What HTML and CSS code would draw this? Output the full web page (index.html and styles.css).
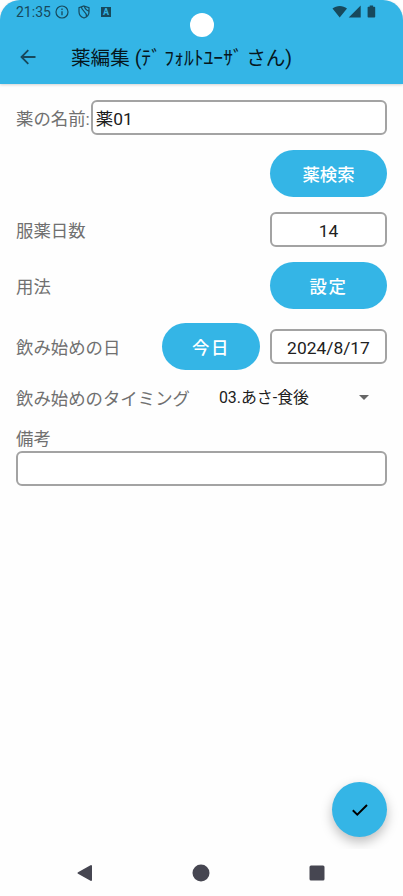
FILE: index.html
```html
<!DOCTYPE html>
<html lang="ja">
<head>
<meta charset="utf-8">
<title>薬編集</title>
<link rel="stylesheet" href="styles.css">
</head>
<body>
<div class="screen">
  <header class="top">
    <div class="status">
      <span class="clock">21:35</span>
      <svg class="info" width="14" height="14" viewBox="0 0 14 14"><circle cx="7" cy="7" r="6" fill="none" stroke="currentColor" stroke-width="1.2"/><path d="M7 6.2v4M7 3.6v1.3" stroke="currentColor" stroke-width="1.3"/></svg>
      <svg class="shield" width="12" height="14" viewBox="0 0 12 14"><path d="M6 1 11 2.700v4C11 9.500 9 12 6 13 3 12 1 9.500 1 6.700v-4zM3.500 2.200C3.500 6 8.800 6.500 8.500 11.300M6.500 1.200C6.500 3.800 8.500 5 10.800 6.200" fill="none" stroke="currentColor" stroke-width="1.200"/></svg>
      <span class="badge">A</span>
      <span class="spacer"></span>
      <svg width="44" height="14" viewBox="0 0 44 14" fill="currentColor"><path d="M.5 3.600C4.500.2 11 .2 15 3.600L7.700 12.500zM28.700.5v12H16.700zM37.700.5h3.400v1.300h1.300q.8 0 .8.800v9.100q0 .8-.8.800h-6q-.8 0-.8-.8V2.600q0-.8.8-.8h1.300z"/></svg>
    </div>
    <div class="camera"></div>
    <div class="appbar">
      <svg class="back" width="16" height="16" viewBox="0 0 16 16" fill="none" stroke="currentColor" stroke-width="1.800"><path d="M15.500 8H1.700M8.300 1.200 1.500 8l6.800 6.800"/></svg>
      <h1>薬編集 (ﾃ<span class="mark">ﾞ</span>ﾌｫﾙﾄﾕｰｻ<span class="mark">ﾞ</span>さん)</h1>
    </div>
  </header>
  <main>
    <div class="row name"><label>薬の名前:</label><div class="field grow">薬01</div></div>
    <div class="row end"><button>薬検索</button></div>
    <div class="row"><label>服薬日数</label><div class="field short">14</div></div>
    <div class="row"><label>用法</label><button class="spaced">設定</button></div>
    <div class="row start"><label>飲み始めの日</label><button class="today spaced">今日</button><div class="field short">2024/8/17</div></div>
    <div class="row timing"><label>飲み始めのタイミング</label><span class="choice">03.あさ-食後</span><svg class="caret" width="10" height="5" viewBox="0 0 10 5"><path d="M0 0h10L5 5z" fill="#666"/></svg></div>
    <div class="note"><label>備考</label><div class="field"></div></div>
  </main>
  <div class="fab-area"><div class="fab"><svg width="16" height="12" viewBox="0 0 16 12" fill="none" stroke="#000" stroke-width="2"><path d="M.8 6.200 5.300 10.600 15 1"/></svg></div></div>
  <nav>
    <svg width="16" height="18" viewBox="0 0 16 18"><path d="M1.500 9 14 2v14z" fill="#464651" stroke="#464651" stroke-width="2" stroke-linejoin="round"/></svg>
    <svg width="18" height="18" viewBox="0 0 18 18"><circle cx="9" cy="9" r="8.500" fill="#464651"/></svg>
    <svg width="16" height="16" viewBox="0 0 16 16"><rect x=".5" y=".5" width="15" height="15" rx="1.500" fill="#464651"/></svg>
  </nav>
</div>
</body>
</html>
```
FILE: styles.css
```css
* { box-sizing: border-box; }
body { margin: 0; background: #fff; font-family: Roboto, "Noto Sans CJK JP", sans-serif; }
.screen { position: relative; width: 403px; height: 896px; display: flex; flex-direction: column; overflow: hidden; background: #fefefe; }
.top { position: relative; height: 84px; background: #34b5e6; border-radius: 20px 20px 0 0; box-shadow: 0 1px 3px rgba(0,0,0,.18); flex: none; }
.status { height: 24px; padding: 0 27px 0 16px; display: flex; align-items: center; color: #17495c; }
.clock { width: 35px; font-size: 14px; line-height: 24px; }
.info { margin-left: 4px; }
.shield { margin-left: 9px; }
.badge { margin-left: 11px; width: 10px; height: 10px; background: #17495c; color: #34b5e6; font-size: 9px; font-weight: 700; line-height: 10px; text-align: center; }
.spacer { flex: 1; }
.camera { position: absolute; left: 190px; top: 13px; width: 24px; height: 24px; border-radius: 50%; background: #fff; }
.appbar { height: 66px; display: flex; align-items: center; padding-left: 20px; color: #17495c; }
h1 { margin: 0; padding: 4px 0 0 35px; font-size: 19.6px; line-height: 30px; font-weight: 400; color: #06171e; white-space: nowrap; }
.mark { letter-spacing: 3.4px; }
main { padding: 16px 16px 0; color: #707070; font-size: 17.4px; line-height: 26px; }
.row { display: flex; align-items: center; justify-content: space-between; white-space: nowrap; margin-bottom: 15px; }
label { padding-top: 3px; }
.end { justify-content: flex-end; }
.field { height: 35px; border: 2px solid #a3a3a3; border-radius: 6px; background: #fff; color: #202020; padding: 4px 3px 0; line-height: 27px; }
.grow { flex: 1; margin-left: 1px; }
.short { width: 117px; text-align: center; }
button { width: 117px; height: 47px; border: 0; border-radius: 24px; padding: 2px 0 0; background: #34b5e6; color: #fff; font: 500 17.4px/26px Roboto, "Noto Sans CJK JP", sans-serif; }
.spaced { letter-spacing: 1.5px; }
.start { margin-top: -1px; margin-bottom: 14px; }
.today { width: 98px; margin: 0 10px 0 auto; }
.timing { margin-bottom: 13px; }
.timing label { padding-top: 2px; }
.choice { margin-left: 29px; color: #202020; font-size: 15.9px; }
.caret { margin: 0 18px 2px auto; }
.note label { display: block; height: 26px; padding-top: 1px; }
.fab-area { position: absolute; left: 303px; top: 765px; width: 100px; height: 84px; overflow: hidden; }
.fab { margin: 17px 0 0 29px; width: 55px; height: 55px; border-radius: 50%; background: #34b5e6; display: flex; align-items: center; justify-content: center; box-shadow: 0 5px 12px rgba(0,0,0,.26); }
nav { height: 47px; margin-top: auto; padding: 0 78px 0 77px; display: flex; justify-content: space-between; align-items: center; }
```
